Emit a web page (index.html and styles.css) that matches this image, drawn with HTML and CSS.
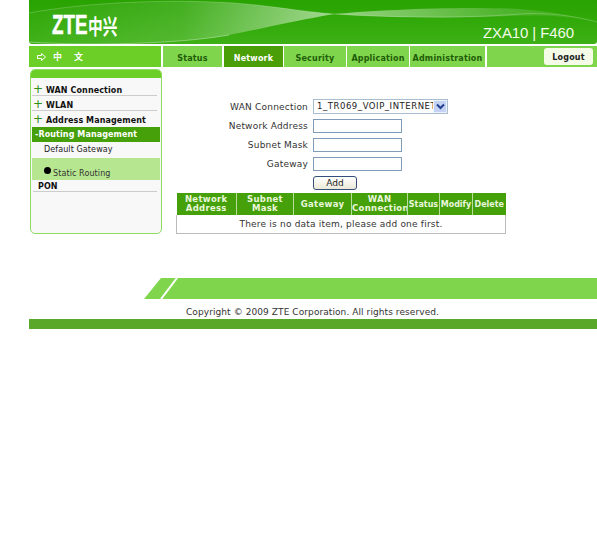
FILE: index.html
```html
<!DOCTYPE html>
<html lang="en">
<head>
  <meta charset="utf-8" />
  <title>ZXA10 F460</title>
  <link rel="stylesheet" href="styles.css">
</head>
<body>
  <div class="page">
    <header class="banner">
      <svg class="swoosh" viewBox="0 0 568 44" preserveAspectRatio="none" aria-hidden="true">
        <defs>
          <linearGradient id="lens-a" x1="0" y1="0" x2="1" y2="0">
            <stop offset="0" stop-color="#fff" stop-opacity=".02"/>
            <stop offset=".5" stop-color="#fff" stop-opacity=".12"/>
            <stop offset="1" stop-color="#fff" stop-opacity=".55"/>
          </linearGradient>
          <linearGradient id="lens-b" x1="0" y1="0" x2="1" y2="0">
            <stop offset="0" stop-color="#fff" stop-opacity=".5"/>
            <stop offset=".6" stop-color="#fff" stop-opacity=".18"/>
            <stop offset="1" stop-color="#fff" stop-opacity=".04"/>
          </linearGradient>
        </defs>
        <path d="M0 13C60 2 140 -1 205 3C245 6 275 12 305 14C270 20 240 27 200 35C150 44 60 46 0 42Z" fill="url(#lens-a)"/>
        <path d="M305 14C350 10 430 6 490 9C520 11 545 16 568 22C530 14 500 15 450 17C400 18 345 17 305 14Z" fill="url(#lens-b)"/>
        <path d="M0 13C60 2 140 -1 205 3C245 6 275 12 305 14C350 17 430 19 490 14C520 12 545 16 568 22" fill="none" stroke="#fff" stroke-opacity=".3" stroke-width=".7"/>
        <path d="M0 42C60 46 150 44 200 35" fill="none" stroke="#fff" stroke-opacity=".45" stroke-width=".8"/>
      </svg>
      <div class="logo"><span class="logo-zte">ZTE</span><span class="logo-cn">中兴</span></div>
      <div class="model">ZXA10 | F460</div>
    </header>

    <nav class="navbar">
      <div class="lang">
        <svg class="lang-arrow" viewBox="0 0 9 8" aria-hidden="true"><path d="M.5 2.500H4.500V.5L8.500 4L4.500 7.500V5.500H.5Z" fill="none" stroke="#fff"/></svg>
        <span>中</span><span>文</span>
      </div>
      <a class="tab tab-status">Status</a>
      <a class="tab tab-network active">Network</a>
      <a class="tab tab-security">Security</a>
      <a class="tab tab-app">Application</a>
      <a class="tab tab-admin">Administration</a>
      <div class="nav-rest"><button class="logout">Logout</button></div>
    </nav>

    <div class="content">
      <aside class="side">
        <div class="side-top"></div>
        <ul class="menu">
          <li class="item item-first"><span class="plus">+</span>WAN Connection</li>
          <li class="item"><span class="plus">+</span>WLAN</li>
          <li class="item item-addr"><span class="plus">+</span>Address Management</li>
          <li class="item-open">-Routing Management</li>
          <li class="sub">Default Gateway</li>
          <li class="sub-on"><span class="dot"></span>Static Routing</li>
          <li class="item item-pon">PON</li>
        </ul>
      </aside>

      <main class="main">
        <form class="form">
          <label class="lbl" for="wan">WAN Connection</label>
          <div class="select" id="wan"><span class="select-val">1_TR069_VOIP_INTERNET</span><span class="select-btn"><svg viewBox="0 0 9 7" width="9" height="7" aria-hidden="true"><path d="M1 1.500L4.500 5L8 1.500" fill="none" stroke="#23408f" stroke-width="2"/></svg></span></div>
          <label class="lbl" for="net">Network Address</label>
          <input class="field" id="net" type="text" />
          <label class="lbl" for="mask">Subnet Mask</label>
          <input class="field" id="mask" type="text" />
          <label class="lbl" for="gw">Gateway</label>
          <input class="field" id="gw" type="text" />
          <span></span>
          <button class="add" type="button">Add</button>
        </form>

        <table class="list">
          <colgroup>
            <col class="c1"><col class="c2"><col class="c3"><col class="c4"><col class="c5"><col class="c6"><col class="c7">
          </colgroup>
          <thead>
            <tr>
              <th>Network Address</th>
              <th>Subnet Mask</th>
              <th>Gateway</th>
              <th>WAN Connection</th>
              <th>Status</th>
              <th>Modify</th>
              <th>Delete</th>
            </tr>
          </thead>
          <tbody>
            <tr><td colspan="7">There is no data item, please add one first.</td></tr>
          </tbody>
        </table>
      </main>
    </div>

    <div class="stripe">
      <svg class="stripe-cut" viewBox="0 0 40 21" aria-hidden="true"><path d="M0 21L17 0H40V21Z" fill="#7fd64d"/><path d="M17 21L33 0" stroke="#fff" stroke-width="2" fill="none"/></svg>
      <div class="stripe-bar"></div>
    </div>
    <div class="copy">Copyright © 2009 ZTE Corporation. All rights reserved.</div>
    <div class="bottom"></div>
  </div>
</body>
</html>
```

FILE: styles.css
```css
* { box-sizing: border-box; }
body { margin: 0; background: #fff; color: #222; font-family: "DejaVu Sans", Verdana, sans-serif; }
.page { width: 568px; margin-left: 29px; }

/* banner */
.banner { position: relative; height: 44px; background: linear-gradient(#28a300, #3db015); border-radius: 0 0 3px 3px; overflow: hidden; display: flex; justify-content: space-between; }
.swoosh { position: absolute; left: 0; top: 0; width: 100%; height: 100%; }
.logo { position: relative; display: flex; align-items: flex-start; margin-left: 23px; padding-top: 13px; color: #fff; }
.logo-zte { display: block; width: 36px; font: bold 28px/24px "Liberation Sans", sans-serif; -webkit-text-stroke: .5px #fff; transform: scaleX(.67); transform-origin: left top; letter-spacing: 0; white-space: nowrap; }
.logo-cn { display: block; width: 30px; font: bold 21px/24px "Noto Sans CJK SC", sans-serif; transform: scaleX(.7); transform-origin: left top; white-space: nowrap; }
.model { position: relative; margin: 24px 23px 0 0; color: #f2fbe8; font: 15px/18px "Liberation Sans", sans-serif; letter-spacing: -.1px; }

/* top nav */
.navbar { display: flex; margin-top: 2px; height: 21px; font-size: 8px; }
.lang { width: 132px; background: #6ccf27; color: #fff; display: flex; align-items: center; gap: 7px; padding-left: 8px; font: bold 9px "Noto Sans CJK SC", sans-serif; margin-right: 2px; }
.lang span + span { margin-left: 5px; }
.lang-arrow { width: 9px; height: 8px; }
.tab { background: #7fd64d; color: #1f5c08; font-weight: bold; display: flex; align-items: center; justify-content: center; padding-top: 3px; letter-spacing: .2px; margin-right: 1px; white-space: nowrap; }
.tab.active { background: #4a9e08; color: #fff; }
.tab-status { width: 59px; margin-right: 2px; }
.tab-network { width: 59px; margin-right: 1px; }
.tab-security { width: 62px; }
.tab-app { width: 62px; }
.tab-admin { width: 75px; margin-right: 2px; }
.nav-rest { flex: 1; background: #7fd64d; display: flex; align-items: center; justify-content: flex-end; padding-right: 4px; }
.logout { width: 49px; height: 17px; padding: 2px 0 0; border: 0; border-radius: 3px; background: #f4fbe6; color: #222; font: bold 8px "DejaVu Sans", sans-serif; letter-spacing: .2px; }

/* content row */
.content { display: flex; margin-top: 2px; height: 165px; }

/* left menu */
.side { width: 132px; margin-left: 1px; height: 165px; border: 1px solid #8fdc62; border-radius: 5px; overflow: hidden; background: #f8f8f8; }
.side-top { height: 8px; background: #6ccf27; }
.menu { list-style: none; margin: 0; padding: 0 1px; }
.menu li { white-space: nowrap; }
.item { height: 15px; line-height: 16px; font-size: 8px; font-weight: bold; letter-spacing: .1px; border-bottom: 1px solid #ccc; margin: 0 3px 0 0; padding-left: 1px; color: #111; }
.item-first { height: 18px; line-height: 22px; }
.item-addr { border-bottom: 0; height: 16px; line-height: 17px; }
.item-pon { height: 12px; line-height: 14px; padding-left: 5px; margin-left: 1px; }
.plus { display: inline-block; width: 13px; color: #2f8f10; font-weight: normal; font-size: 12px; letter-spacing: 0; }
.item-open { height: 15px; line-height: 16px; background: #46a00a; color: #fff; font-size: 8px; font-weight: bold; letter-spacing: .1px; padding-left: 3px; }
.sub { height: 16px; line-height: 15px; font-size: 8px; padding-left: 12px; color: #222; letter-spacing: .1px; }
.sub-on { position: relative; height: 22px; background: #b6e690; font-size: 8px; line-height: 31px; padding-left: 21px; color: #333; letter-spacing: .1px; }
.dot { position: absolute; left: 12px; top: 9px; width: 7px; height: 7px; border-radius: 50%; background: #000; }

/* form + table */
.main { flex: 1; margin-left: 14px; padding-top: 30px; font-size: 9px; }
.form { display: grid; grid-template-columns: 132px max-content; column-gap: 5px; row-gap: 5px; align-items: center; justify-content: start; height: 94px; grid-template-rows: 15px 14px 14px 14px 14px; }
.lbl { text-align: right; color: #333; white-space: nowrap; letter-spacing: .2px; }
.select { width: 135px; height: 15px; border: 1px solid #a9bdd0; display: flex; font-size: 8.500px; line-height: 13px; color: #222; }
.select-val { flex: 1; overflow: hidden; white-space: nowrap; padding-left: 3px; letter-spacing: .55px; }
.select-btn { width: 14px; flex: none; background: #c4d3f3; border: 1px solid #eef2fb; display: flex; align-items: center; justify-content: center; }
.field { width: 89px; height: 14px; border: 1px solid #7f9db9; background: #fff; padding: 0; }
.add { width: 44px; height: 14px; padding: 0; border: 1px solid #34507a; border-radius: 3px; background: linear-gradient(#fff, #ece9d8); color: #222; font: 9px/12px "DejaVu Sans", sans-serif; }
.list { width: 329px; border-collapse: collapse; table-layout: fixed; font-size: 9px; }
.c1 { width: 60px; } .c2 { width: 57px; } .c3 { width: 58px; } .c4 { width: 56px; } .c5 { width: 32px; } .c6 { width: 33px; } .c7 { width: 33px; }
.list th { height: 22px; padding: 0; background: #46a00a; color: #e9f7dc; font-size: 8.500px; line-height: 9px; font-weight: bold; letter-spacing: .3px; border-left: 1px solid #b8dd9c; white-space: normal; overflow: hidden; }
.list th:first-child { border-left: 0; }
.list th:nth-child(n+5) { font-size: 8px; letter-spacing: 0; }
.list td { height: 18px; padding: 0; text-align: center; border: 1px solid #bbb; border-top: 0; color: #333; letter-spacing: .2px; }

/* footer */
.stripe { display: flex; height: 21px; margin-top: 44px; padding-left: 115px; }
.stripe-cut { width: 40px; height: 21px; display: block; }
.stripe-bar { flex: 1; background: #7fd64d; }
.copy { height: 20px; padding-left: 157px; padding-top: 8px; font-size: 9px; line-height: 11px; color: #333; letter-spacing: .08px; white-space: nowrap; }
.bottom { height: 10px; background: #5aa82a; }
```
